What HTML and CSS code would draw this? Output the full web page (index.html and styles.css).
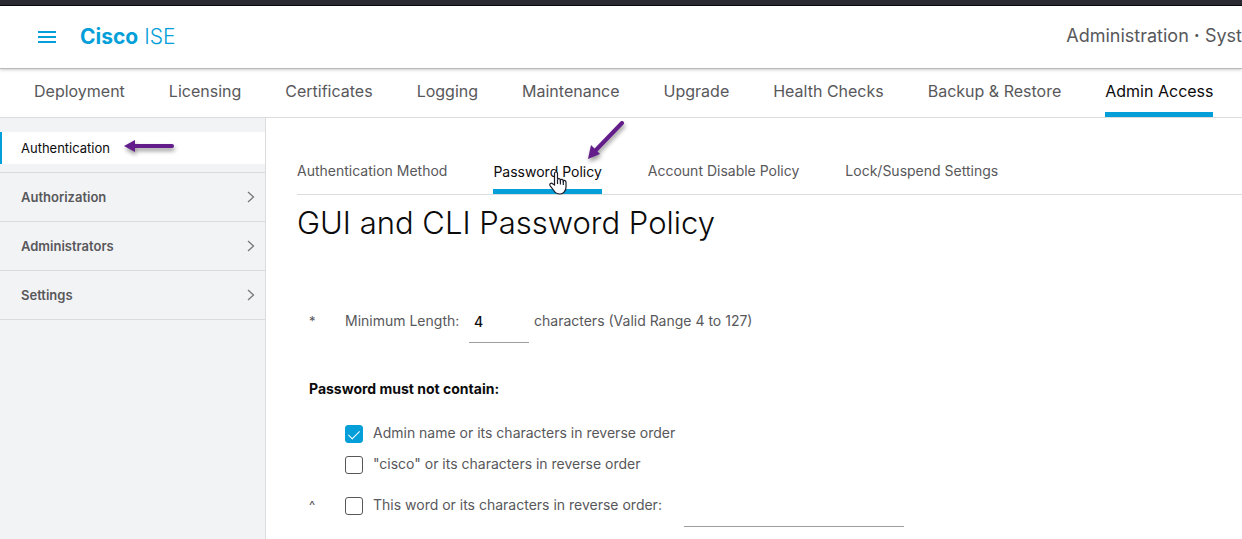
FILE: index.html
```html
<!DOCTYPE html>
<html lang="en">
<head>
    <meta charset="UTF-8">
    <meta name="viewport" content="width=device-width, initial-scale=1.0">
    <title>Cisco ISE - Password Policy</title>
    <link rel="stylesheet" href="styles.css">
</head>
<body>
    <div class="window-bar"></div>

    <!-- Header -->
    <header class="header">
        <button type="button" class="menu-button" aria-label="Menu">
            <svg width="18" height="12" viewBox="0 0 18 12"><path d="M0 1h18M0 6h18M0 11h18" stroke="#049fd9" stroke-width="2"/></svg>
        </button>
        <a href="#" class="brand"><strong>Cisco</strong> ISE</a>
        <div class="breadcrumb">Administration <b>·</b> Syst</div>
    </header>

    <!-- Main tabs -->
    <nav class="main-tabs">
        <a href="#">Deployment</a>
        <a href="#">Licensing</a>
        <a href="#">Certificates</a>
        <a href="#">Logging</a>
        <a href="#">Maintenance</a>
        <a href="#">Upgrade</a>
        <a href="#">Health Checks</a>
        <a href="#">Backup &amp; Restore</a>
        <a href="#" class="active">Admin Access</a>
    </nav>

    <div class="layout">
        <!-- Sidebar -->
        <aside class="sidebar">
            <div class="sidebar-current">
                <a href="#">Authentication
                    <svg class="arrow arrow-left" width="56" height="22" viewBox="0 0 56 22">
                        <path d="M12 9H50" stroke="#631d8b" stroke-width="4" stroke-linecap="round"/>
                        <path d="M2 9L13 3V15Z" fill="#631d8b"/>
                    </svg>
                </a>
            </div>
            <a href="#" class="sidebar-item">Authorization
                <svg width="8" height="12" viewBox="0 0 8 12"><path d="M1 1l5.5 5L1 11" fill="none" stroke="#77787b" stroke-width="1.3"/></svg>
            </a>
            <a href="#" class="sidebar-item">Administrators
                <svg width="8" height="12" viewBox="0 0 8 12"><path d="M1 1l5.5 5L1 11" fill="none" stroke="#77787b" stroke-width="1.3"/></svg>
            </a>
            <a href="#" class="sidebar-item">Settings
                <svg width="8" height="12" viewBox="0 0 8 12"><path d="M1 1l5.5 5L1 11" fill="none" stroke="#77787b" stroke-width="1.3"/></svg>
            </a>
        </aside>

        <main class="content">
            <nav class="sub-tabs">
                <a href="#">Authentication Method</a>
                <a href="#" class="active">Password Policy
                    <svg class="arrow arrow-down" width="44" height="48" viewBox="0 0 44 48">
                        <path d="M36 6L10 33" stroke="#631d8b" stroke-width="4" stroke-linecap="round"/>
                        <path d="M2 42L5 28L14 37Z" fill="#631d8b"/>
                    </svg>
                    <svg class="cursor" width="18" height="24" viewBox="0 0 18 24">
                        <path d="M5.5 14V2.5C5.5 .5 8.5 .5 8.5 2.5V8.5C9 7 11.3 7.3 11.4 9C12 7.8 14.2 8.2 14.3 10C15 9 17 9.5 17 11.3V16C17 19.5 14.5 23 11 23C7.5 23 6 21.5 4.8 19.5L1.2 14.8C0 12.8 2.2 11.5 3.6 12.8Z" fill="#fff" stroke="#1c1c28" stroke-width="1.2"/>
                        <path d="M8.5 8.5V13M11.4 9V13.5M14.3 10V14" stroke="#1c1c28" stroke-width="1.2"/>
                    </svg>
                </a>
                <a href="#">Account Disable Policy</a>
                <a href="#">Lock/Suspend Settings</a>
            </nav>

            <h1 class="title">GUI and CLI Password Policy</h1>

            <form class="policy-form">
                <div class="length-row">
                    <span class="mark">*</span>
                    <label for="minLength">Minimum Length:</label>
                    <input type="text" id="minLength" class="line-input short" value="4">
                    <span>characters (Valid Range 4 to 127)</span>
                </div>

                <h2 class="section-title">Password must not contain:</h2>

                <div class="check-row">
                    <span class="mark"></span>
                    <input type="checkbox" id="adminName" checked>
                    <label for="adminName">Admin name or its characters in reverse order</label>
                </div>
                <div class="check-row">
                    <span class="mark"></span>
                    <input type="checkbox" id="ciscoWord">
                    <label for="ciscoWord">"cisco" or its characters in reverse order</label>
                </div>
                <div class="check-row word-row">
                    <span class="mark">^</span>
                    <input type="checkbox" id="customWord">
                    <label for="customWord">This word or its characters in reverse order:</label>
                    <input type="text" class="line-input" aria-label="Word">
                </div>
            </form>
        </main>
    </div>
</body>
</html>
```
FILE: styles.css
```css
:root {
    --blue: #049fd9;
    --text: #58585b;
    --line: #dbdcde;
}

* {
    margin: 0;
    padding: 0;
    box-sizing: border-box;
}

body {
    font-family: Inter, "Liberation Sans", sans-serif;
    font-size: 14px;
    line-height: 20px;
    color: var(--text);
    background: #fff;
    min-height: 100vh;
    overflow: hidden;
    display: flex;
    flex-direction: column;
    white-space: nowrap;
}

a {
    color: inherit;
    text-decoration: none;
}

.window-bar {
    height: 6px;
    background: #2b2a33;
    border-bottom: 1px solid #0c0c0d;
}

/* Header */
.header {
    height: 63px;
    padding-left: 38px;
    display: flex;
    align-items: center;
    border-bottom: 1px solid #b8b8b8;
    box-shadow: 0 1px 3px rgba(0, 0, 0, 0.2);
}

.menu-button {
    border: none;
    background: none;
    display: flex;
    margin-right: 24px;
    cursor: pointer;
}

.brand {
    font-size: 21px;
    font-weight: 300;
    color: var(--blue);
}

.brand strong {
    font-weight: 700;
}

.breadcrumb {
    margin-left: auto;
    padding-bottom: 2px;
    font-size: 18px;
}

/* Main tabs */
.main-tabs {
    display: flex;
    gap: 44px;
    height: 49px;
    padding-left: 34px;
    border-bottom: 1px solid var(--line);
    font-size: 16px;
}

.main-tabs a {
    padding-top: 12px;
}

.main-tabs .active {
    color: #0b0b0c;
    border-bottom: 5px solid var(--blue);
}

.layout {
    flex: 1;
    display: flex;
}

/* Sidebar */
.sidebar {
    flex: 0 0 266px;
    background: #f2f3f5;
    border-right: 1px solid var(--line);
    font-size: 13px;
}

.sidebar-current {
    padding: 14px 0 8px;
    border-bottom: 1px solid var(--line);
}

.sidebar-current a {
    position: relative;
    display: block;
    padding: 6px 19px;
    border-left: 2px solid var(--blue);
    background: #fff;
    color: #0b0b0c;
}

.sidebar-item {
    height: 49px;
    padding: 0 10px 0 21px;
    display: flex;
    align-items: center;
    justify-content: space-between;
    border-bottom: 1px solid var(--line);
    font-weight: 600;
}

/* Callout arrows and pointer */
.arrow {
    position: absolute;
    filter: drop-shadow(1px 3px 2px rgba(0, 0, 0, 0.4));
}

.arrow-left {
    left: 120px;
    top: 5px;
}

.arrow-down {
    right: -28px;
    top: -43px;
}

.cursor {
    position: absolute;
    left: 56px;
    top: 11px;
}

/* Content */
.content {
    flex: 1;
    min-width: 0;
    padding: 42px 0 0 31px;
}

.sub-tabs {
    display: flex;
    gap: 46px;
    height: 35px;
    border-bottom: 1px solid var(--line);
}

.sub-tabs a {
    padding-top: 1px;
}

.sub-tabs .active {
    position: relative;
    padding-top: 2px;
    color: #0b0b0c;
    border-bottom: 5px solid var(--blue);
}

.title {
    margin-top: 8px;
    font-size: 31px;
    line-height: 40px;
    font-weight: 300;
    color: #0b0b0c;
}

.policy-form {
    padding: 69px 0 0 12px;
    font-size: 14px;
    line-height: 18px;
}

.mark {
    width: 36px;
    font-size: 13px;
}

.length-row {
    display: flex;
}

.length-row label {
    min-width: 119px;
}

.line-input {
    width: 220px;
    height: 31px;
    margin: 0 5px;
    padding: 0 5px 12px;
    border: none;
    border-bottom: 1px solid #9e9ea2;
    background: none;
    outline: none;
    font: inherit;
    color: #0b0b0c;
}

.line-input.short {
    width: 60px;
    font-weight: 500;
}

.section-title {
    margin: 36px 0 25px;
    font-size: 14px;
    line-height: 20px;
    font-weight: 700;
    color: #0b0b0c;
}

.check-row {
    display: flex;
    align-items: flex-start;
    margin-bottom: 11px;
}

.check-row input[type="checkbox"] {
    appearance: none;
    width: 18px;
    height: 18px;
    margin: 1px 10px 1px 0;
    border: 1px solid var(--text);
    border-radius: 3px;
    background: #fff;
}

.check-row input[type="checkbox"]:checked {
    border-color: var(--blue);
    background: var(--blue);
    display: flex;
    justify-content: center;
}

.check-row input[type="checkbox"]:checked::before {
    content: "";
    width: 5px;
    height: 10px;
    margin-top: 2px;
    border: solid #fff;
    border-width: 0 1px 1px 0;
    transform: rotate(45deg);
}

.word-row {
    margin-top: 21px;
}

.word-row label {
    min-width: 306px;
}
```
